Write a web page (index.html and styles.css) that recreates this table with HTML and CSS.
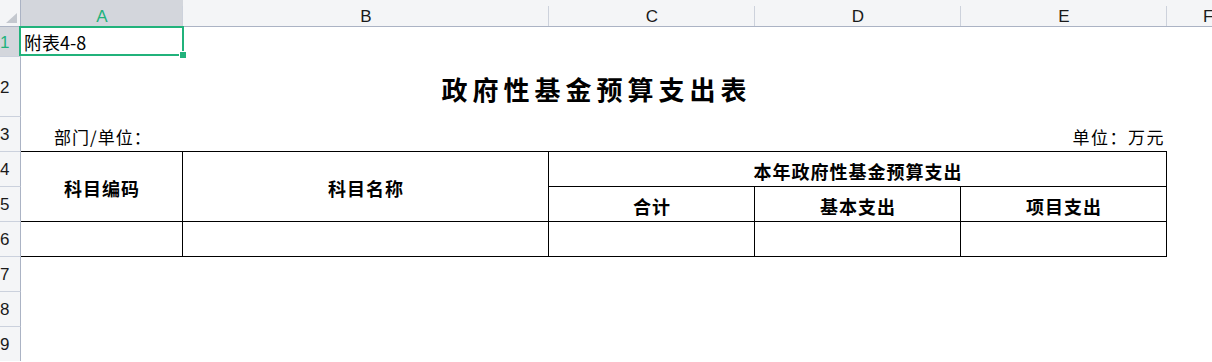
FILE: index.html
```html
<!DOCTYPE html>
<html lang="zh-CN">
<head>
<meta charset="utf-8">
<title>政府性基金预算支出表</title>
<link rel="stylesheet" href="styles.css">
</head>
<body>
<div class="sheet">
  <div class="corner"><span class="tri"></span></div>
  <div class="colh sel">A</div>
  <div class="colh">B</div>
  <div class="colh">C</div>
  <div class="colh">D</div>
  <div class="colh">E</div>
  <div class="colh last">F</div>

  <div class="tbl">
    <div class="tc rows2">科目编码</div>
    <div class="tc rows2">科目名称</div>
    <div class="tc cols3">本年政府性基金预算支出</div>
    <div class="tc">合计</div>
    <div class="tc">基本支出</div>
    <div class="tc">项目支出</div>
    <div class="tc"></div>
    <div class="tc"></div>
    <div class="tc"></div>
    <div class="tc"></div>
    <div class="tc"></div>
  </div>

  <div class="rh sel">1</div>
  <div class="c a1">附表4-8<span class="selbox"><span class="handle"></span></span></div>
  <div class="c span5"></div>

  <div class="rh">2</div>
  <div class="c title">政府性基金预算支出表</div>
  <div class="c"></div>

  <div class="rh">3</div>
  <div class="c dept">部门/单位：</div>
  <div class="c unit">单位：万元</div>
  <div class="c"></div>

  <div class="rh">4</div>
  <div class="c"></div>
  <div class="rh">5</div>
  <div class="c"></div>
  <div class="rh">6</div>
  <div class="c"></div>

  <div class="rh">7</div>
  <div class="c span6"></div>
  <div class="rh">8</div>
  <div class="c span6"></div>
  <div class="rh">9</div>
  <div class="c span6"></div>
</div>
</body>
</html>
```

FILE: styles.css
```css
html, body {
  margin: 0;
  padding: 0;
  background: #ffffff;
}

body {
  font-family: "Noto Sans CJK SC", "Noto Sans", sans-serif;
  color: #000000;
}

.sheet {
  display: grid;
  grid-template-columns: 21px 162px 366px 206px 206px 206px 1fr;
  grid-template-rows: 27px 29px 60px repeat(7, 35px);
  width: 1212px;
  height: 362px;
  overflow: hidden;
}

/* ---------- headers ---------- */
.corner {
  box-sizing: border-box;
  background: #f4f5f7;
  border-right: 1px solid #abb3c4;
  border-bottom: 1px solid #abb3c4;
  display: flex;
  justify-content: flex-end;
  align-items: flex-end;
  padding: 0 3px 3px 0;
}

.tri {
  width: 11px;
  height: 10px;
  background: #c4c8cf;
  clip-path: polygon(100% 0, 100% 100%, 0 100%);
}

.colh {
  position: relative;
  box-sizing: border-box;
  background: #f4f5f7;
  border-bottom: 1px solid #abb3c4;
  font-family: "Liberation Sans", Arial, sans-serif;
  font-size: 17px;
  line-height: 18px;
  padding-top: 8px;
  text-align: center;
  color: #1a1a1a;
}

.colh::after {
  content: "";
  position: absolute;
  right: 0;
  top: 6px;
  bottom: 0;
  width: 1px;
  background: #cdd2dc;
}

.colh.sel {
  background: #d3d6dc;
  color: #21b27b;
}

.colh.last {
  text-align: left;
  padding-left: 36px;
}

.colh.last::after {
  display: none;
}

.rh {
  box-sizing: border-box;
  background: #f4f5f7;
  border-right: 1px solid #abb3c4;
  border-top: 1px solid #cbd1dd;
  font-family: "Liberation Sans", Arial, sans-serif;
  font-size: 17px;
  color: #1a1a1a;
  display: flex;
  align-items: center;
  padding-top: 2px;
}

.rh.sel {
  background: #d3d6dc;
  color: #21b27b;
  border-top: none;
}

/* ---------- cells ---------- */
.c {
  min-width: 0;
}

.span5 {
  grid-column: span 5;
}

.span6 {
  grid-column: span 6;
}

.a1 {
  position: relative;
  display: flex;
  align-items: center;
  padding-left: 3px;
  font-size: 18px;
  white-space: nowrap;
}

.selbox {
  position: absolute;
  left: -2px;
  top: -1px;
  right: -1px;
  bottom: 0;
  border: 2px solid #21b27b;
  z-index: 2;
}

.handle {
  position: absolute;
  right: -5px;
  bottom: -5px;
  width: 6px;
  height: 6px;
  background: #21b27b;
  border: 1px solid #ffffff;
}

.title {
  grid-column: span 5;
  display: flex;
  align-items: center;
  justify-content: center;
  padding: 4px 0 0 5px;
  font-size: 26px;
  font-weight: 700;
  letter-spacing: 5px;
}

.dept {
  grid-column: span 4;
  display: flex;
  align-items: center;
  padding: 5px 0 0 33px;
  font-size: 17px;
  letter-spacing: 1px;
}

.unit {
  display: flex;
  align-items: center;
  justify-content: flex-end;
  padding: 5px 2px 0 0;
  font-size: 17px;
  letter-spacing: 1.5px;
}

/* ---------- table ---------- */
.tbl {
  grid-column: 2 / 7;
  grid-row: 5 / 8;
  align-self: start;
  box-sizing: border-box;
  height: 106px;
  display: grid;
  grid-template-columns: 161px 365px 205px 205px 205px;
  grid-template-rows: 34px 34px 34px;
  gap: 1px;
  padding: 1px 1px 1px 0;
  background: #000000;
}

.tc {
  background: #ffffff;
  display: flex;
  align-items: center;
  justify-content: center;
  padding: 4px 0 0 1px;
  font-size: 18px;
  font-weight: 700;
  letter-spacing: 1px;
}

.rows2 {
  grid-row: span 2;
  padding-top: 3px;
}

.cols3 {
  grid-column: span 3;
}
```
